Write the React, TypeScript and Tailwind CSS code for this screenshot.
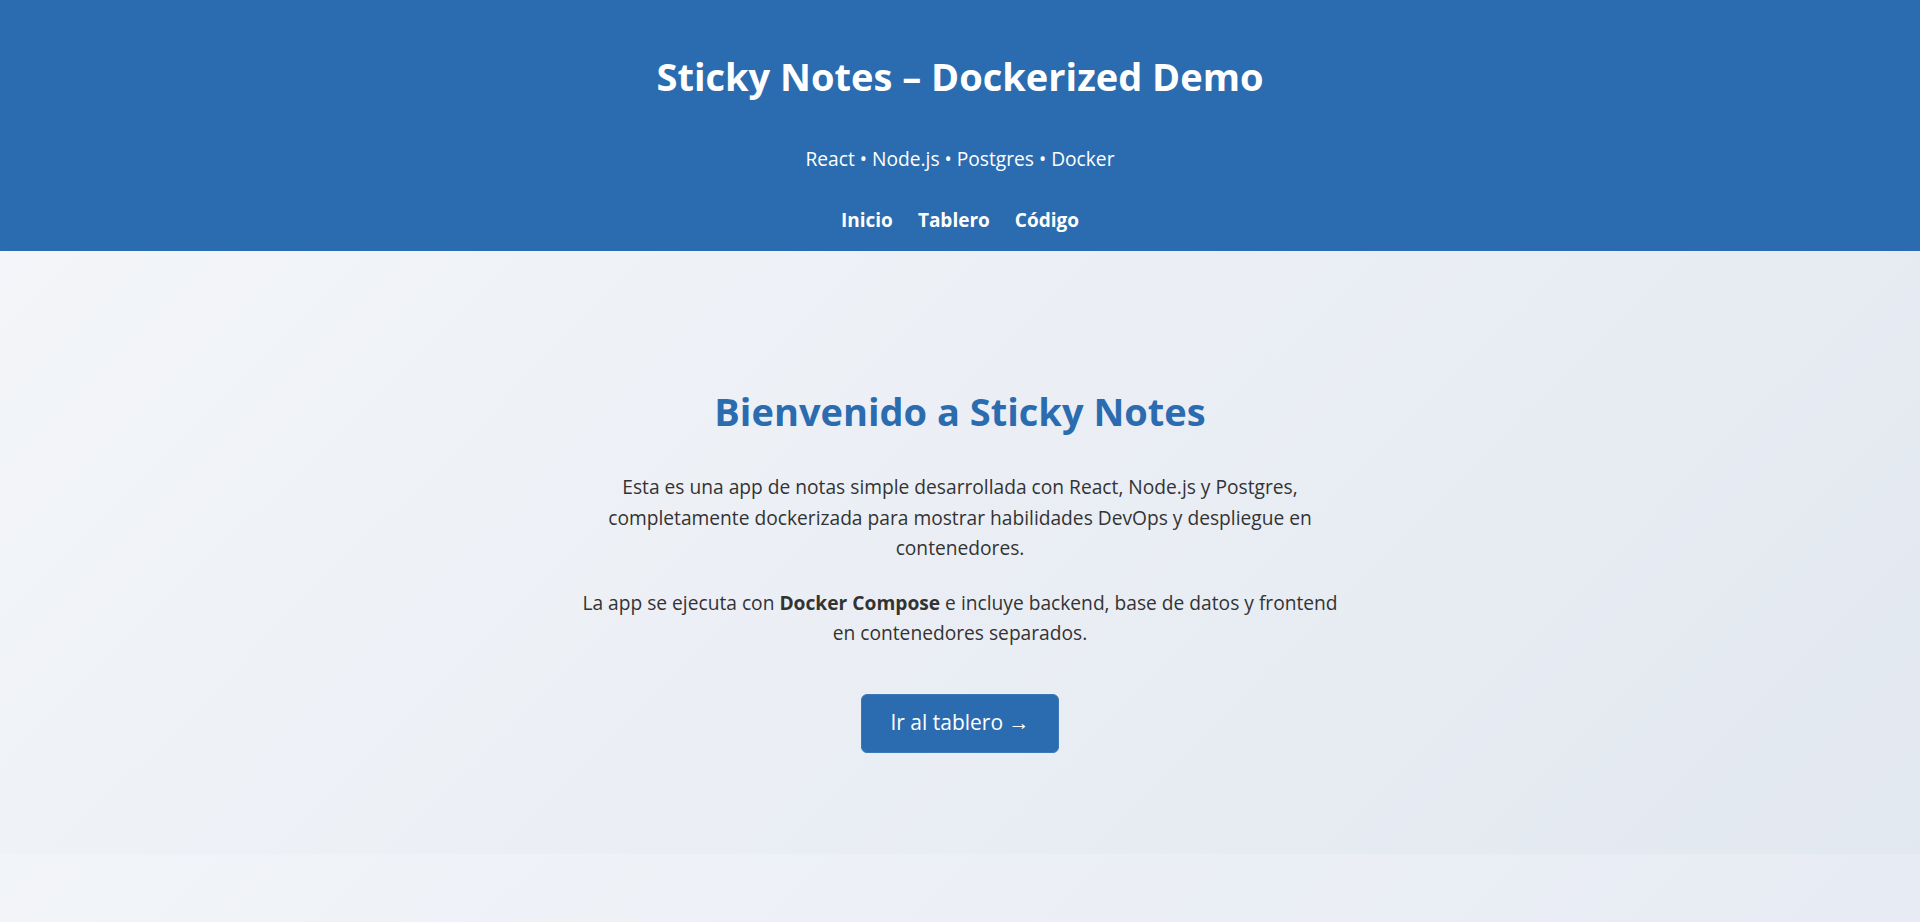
export default function App() {
  return (
    <div className="min-h-[922px] flex flex-col bg-linear-135 from-[#f6f8fb] to-[#e7ebf3] font-['Open_Sans',sans-serif]">
      <header className="bg-[#2b6cb0] text-white flex flex-col items-center pt-[52px] pb-[16px]">
        <h1 className="text-[38px] leading-[48px] font-bold">Sticky Notes – Dockerized Demo</h1>
        <p className="mt-[44px] text-[19.2px] leading-[29px]">React • Node.js • Postgres • Docker</p>
        <nav className="mt-[33px] flex gap-[25px] text-[19px] leading-[29px] font-bold">
          <a href="#">Inicio</a>
          <a href="#">Tablero</a>
          <a href="#">Código</a>
        </nav>
      </header>

      <main className="bg-linear-135 from-[#f3f5f9] to-[#e2e8f0] flex flex-col items-center pt-[136px] pb-[101px]">
        <h2 className="text-[38px] leading-[48px] font-bold text-[#2b6cb0]">Bienvenido a Sticky Notes</h2>
        <div className="max-w-[760px] text-center text-[19.2px] leading-[30.5px] text-[#333]">
          <p className="mt-[37px]">
            Esta es una app de notas simple desarrollada con React, Node.js y Postgres, completamente dockerizada para
            mostrar habilidades DevOps y despliegue en contenedores.
          </p>
          <p className="mt-[24px]">
            La app se ejecuta con <strong>Docker Compose</strong> e incluye backend, base de datos y frontend en
            contenedores separados.
          </p>
        </div>
        <button className="mt-[45px] h-[59px] w-[198px] rounded-md border border-[#3a78b8] bg-[#2b6cb0] text-white text-[21px]">
          Ir al tablero →
        </button>
      </main>
    </div>
  );
}
